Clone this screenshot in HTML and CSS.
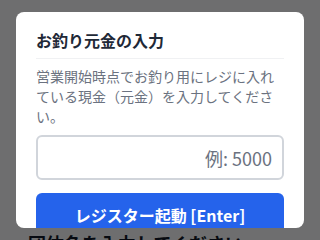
FILE: index.html
```html
<!DOCTYPE html>
<html lang="ja">
<head>
<meta charset="utf-8">
<link rel="stylesheet" href="styles.css">
</head>
<body>
<main class="page">
  <h2 class="page-heading">団体名を入力してください</h2>
</main>
<div class="overlay">
  <div class="modal">
    <h3 class="modal-title">お釣り元金の入力</h3>
    <p class="modal-desc">営業開始時点でお釣り用にレジに入れている現金（元金）を入力してください。</p>
    <input class="amount-input" type="text" placeholder="例: 5000">
    <button class="start-btn">レジスター起動 [Enter]</button>
  </div>
</div>
</body>
</html>
```
FILE: styles.css
```css
* { box-sizing: border-box; }
html, body { margin: 0; padding: 0; }
body {
  width: 320px;
  height: 240px;
  overflow: hidden;
  background: #f3f4f6;
  font-family: "Noto Sans CJK JP", "Noto Sans", sans-serif;
}
.page {
  padding: 231px 28px 0;
}
.page-heading {
  margin: 0;
  font-size: 18px;
  font-weight: 700;
  color: #111827;
  line-height: 24px;
}
.overlay {
  position: fixed;
  inset: 0;
  background: rgba(0, 0, 0, 0.55);
  padding: 12px 16px;
  display: flex;
  align-items: flex-start;
}
.modal {
  width: 100%;
  height: 216px;
  overflow: hidden;
  background: #ffffff;
  border-radius: 8px;
  padding: 16px 20px;
  display: flex;
  flex-direction: column;
}
.modal-title {
  margin: 0;
  font-size: 16px;
  font-weight: 700;
  line-height: 24px;
  color: #1f2937;
  padding-bottom: 6px;
  border-bottom: 1px solid #f0f1f3;
}
.modal-desc {
  margin: 7px 0 0;
  font-size: 14px;
  line-height: 20px;
  color: #6b7280;
}
.amount-input {
  margin-top: 9px;
  flex: none;
  height: 45px;
  width: 100%;
  border: 2px solid #d1d5db;
  border-radius: 6px;
  padding: 0 10px;
  text-align: right;
  font-family: "Noto Sans CJK JP", "Noto Sans", sans-serif;
  font-size: 18px;
  color: #111827;
  background: #fff;
}
.amount-input::placeholder { color: #6b7280; }
.start-btn {
  margin-top: 13px;
  flex: none;
  height: 44px;
  width: 100%;
  border: none;
  border-radius: 6px;
  background: #2563eb;
  color: #ffffff;
  font-family: "Noto Sans CJK JP", "Noto Sans", sans-serif;
  font-size: 16px;
  font-weight: 700;
}
```
